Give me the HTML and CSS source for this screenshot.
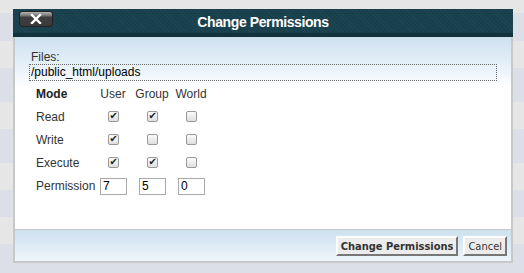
FILE: index.html
```html
<!DOCTYPE html>
<html lang="en">
<head>
	<meta charset="UTF-8">
	<title>Change Permissions</title>
	<link rel="stylesheet" href="styles.css">
</head>
<body>
	<div class="dialog">
		<div class="titlebar">
			<button class="close" title="Close">
				<svg width="12" height="10" viewBox="0 0 12 10"><path d="M2 1 L10 9 M10 1 L2 9" stroke="#fff" stroke-width="2.4" stroke-linecap="square"/></svg>
			</button>
			<div class="title">Change Permissions</div>
		</div>
		<div class="content">
			<div class="files-label">Files:</div>
			<div class="files">/public_html/uploads</div>

			<div class="perms">
				<div class="head">Mode</div>
				<div class="col">User</div>
				<div class="col">Group</div>
				<div class="col">World</div>

				<div class="label">Read</div>
				<div class="col"><span class="box on"></span></div>
				<div class="col"><span class="box on"></span></div>
				<div class="col"><span class="box"></span></div>

				<div class="label">Write</div>
				<div class="col"><span class="box on"></span></div>
				<div class="col"><span class="box"></span></div>
				<div class="col"><span class="box"></span></div>

				<div class="label">Execute</div>
				<div class="col"><span class="box on"></span></div>
				<div class="col"><span class="box on"></span></div>
				<div class="col"><span class="box"></span></div>

				<div class="label last">Permission</div>
				<div class="cell last"><input type="text" value="7"></div>
				<div class="cell last"><input type="text" value="5"></div>
				<div class="cell last"><input type="text" value="0"></div>
			</div>
		</div>
		<div class="footer">
			<button class="btn primary">Change Permissions</button>
			<button class="btn">Cancel</button>
		</div>
	</div>

	<script>
		document.querySelectorAll('.box').forEach(box => {
			box.addEventListener('click', () => box.classList.toggle('on'));
		});
	</script>
</body>
</html>
```
FILE: styles.css
```css
body {
	margin: 0;
	height: 273px;
	overflow: hidden;
	font-family: "Liberation Sans", Arial, sans-serif;
	font-size: 12px;
	color: #333;
	background: linear-gradient(to bottom,
		#e6e6e6 0, #e6e6e6 13px,
		#dcdfe8 13px, #dcdfe8 41px,
		#e6e6e6 41px, #e6e6e6 68px,
		#dcdfe8 68px, #dcdfe8 102px,
		#e6e6e6 102px, #e6e6e6 129px,
		#dcdfe8 129px, #dcdfe8 163px,
		#e6e6e6 163px, #e6e6e6 190px,
		#dcdfe8 190px, #dcdfe8 217px,
		#e6e6e6 217px, #e6e6e6 244px,
		#dcdfe8 244px, #dcdfe8 273px);
}
.dialog {
	width: 500px;
	margin: 9px 0 0 13px;
}
.titlebar {
	position: relative;
	height: 24px;
	border-bottom: 4px solid #12333e;
	background-color: #183f4c;
	background-image: repeating-linear-gradient(45deg, rgba(255,255,255,0.03) 0 1px, rgba(0,0,0,0) 1px 3px);
	display: flex;
	align-items: center;
	justify-content: center;
}
.title {
	color: #fff;
	font-weight: bold;
	font-size: 14px;
	letter-spacing: -0.4px;
	margin-top: 2px;
}
.close {
	position: absolute;
	left: 6px;
	top: 2px;
	width: 34px;
	height: 16px;
	padding: 0;
	border: 1px solid #222;
	border-radius: 3px;
	background: linear-gradient(to bottom, #b5b5b5 0, #6e6e6e 4px, #3e3e3e 5px, #3a3a3a 100%);
	display: flex;
	align-items: center;
	justify-content: center;
}
.content {
	box-sizing: border-box;
	height: 192px;
	border-left: 2px solid #c8c8c8;
	border-right: 2px solid #c8c8c8;
	padding: 13px 0 0 14px;
	background: linear-gradient(to bottom, #cce1ef 0, #eef5fb 36px, #fff 50px);
}
.files-label {
	line-height: 14px;
	margin-left: 2px;
}
.files {
	width: 465px;
	height: 15px;
	line-height: 15px;
	border: 1px dotted #666;
	color: #000;
	padding-left: 1px;
}
.perms {
	display: grid;
	grid-template-columns: 53px 30px 30px 30px;
	grid-auto-rows: 23px;
	column-gap: 9px;
	margin: 1px 0 0 7px;
	align-items: center;
}
.head {
	font-weight: bold;
	color: #222;
}
.col {
	text-align: center;
	display: flex;
	justify-content: center;
}
.perms .last {
	height: 25px;
	display: flex;
	align-items: center;
}
.box {
	width: 9px;
	height: 9px;
	border: 1px solid #999;
	border-radius: 2px;
	background: linear-gradient(to bottom, #fbfbfb, #dedede);
	position: relative;
	cursor: pointer;
}
.box.on::after {
	content: "\2714";
	position: absolute;
	left: 1px;
	top: -2px;
	font-size: 10px;
	color: #222;
	font-family: "DejaVu Sans", sans-serif;
}
.cell input {
	width: 21px;
	height: 13px;
	margin: 1px 0 0 2px;
	padding: 1px 2px;
	border: 1px solid #aaa;
	font-family: "Liberation Sans", Arial, sans-serif;
	font-size: 12px;
	color: #000;
}
.footer {
	height: 31px;
	border: 2px solid #c8c8c8;
	border-top-width: 1px;
	background: linear-gradient(to bottom, #cce1ef, #eef5fb);
	display: flex;
	justify-content: flex-end;
	align-items: center;
	gap: 5px;
	padding-right: 4px;
}
.btn {
	height: 20px;
	padding: 0 3px;
	font-family: "DejaVu Sans Condensed", "DejaVu Sans", Verdana, sans-serif;
	font-size: 11px;
	color: #333;
	background: #ececec;
	border: 2px solid;
	border-color: #fff #777 #777 #fff;
	margin-top: 1px;
}
.btn.primary {
	font-weight: bold;
}
```
